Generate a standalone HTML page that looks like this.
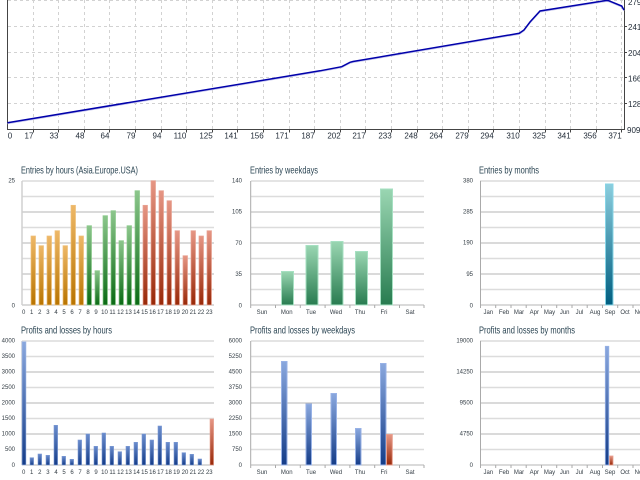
<!DOCTYPE html>
<html><head><meta charset="utf-8"><style>
html,body{margin:0;padding:0;background:#fff;width:640px;height:480px;overflow:hidden}
svg{display:block;font-family:"Liberation Sans",sans-serif}
.t{font-size:10.5px;fill:#2a4452;filter:url(#b)}
.a{font-size:6px;fill:#333c44;filter:url(#b)}
.k{font-size:8px;fill:#222c38}
</style></head><body>
<svg width="640" height="480" viewBox="0 0 640 480" xmlns="http://www.w3.org/2000/svg">
<defs>
<filter id="b" x="-5%" y="-20%" width="110%" height="140%"><feGaussianBlur stdDeviation="0.3"/></filter>
<linearGradient id="o" x1="0" y1="0" x2="0" y2="1"><stop offset="0" stop-color="#eeb868"/><stop offset="1" stop-color="#b87400"/></linearGradient>
<linearGradient id="g" x1="0" y1="0" x2="0" y2="1"><stop offset="0" stop-color="#8cc68c"/><stop offset="1" stop-color="#0a6a14"/></linearGradient>
<linearGradient id="r" x1="0" y1="0" x2="0" y2="1"><stop offset="0" stop-color="#e69684"/><stop offset="1" stop-color="#982808"/></linearGradient>
<linearGradient id="u" x1="0" y1="0" x2="0" y2="1"><stop offset="0" stop-color="#8aa8de"/><stop offset="1" stop-color="#143c88"/></linearGradient>
<linearGradient id="h" x1="0" y1="0" x2="0" y2="1"><stop offset="0" stop-color="#6a8ccc"/><stop offset="1" stop-color="#143c88"/></linearGradient>
<linearGradient id="e" x1="0" y1="0" x2="0" y2="1"><stop offset="0" stop-color="#9ad6b2"/><stop offset="1" stop-color="#287c50"/></linearGradient>
<linearGradient id="c" x1="0" y1="0" x2="0" y2="1"><stop offset="0" stop-color="#8ccede"/><stop offset="1" stop-color="#005e80"/></linearGradient>
<g id="gr">
<path d="M0 6H1000M0 21.5H1000M0 52.5H1000M0 83.5H1000M0 114.5H1000" stroke="#dcdcdc" stroke-width="1.6"/>
<path d="M0 37H1000M0 68H1000M0 99H1000M0 130H1000" stroke="#b4b4b4" stroke-width="1"/>
</g>
</defs>

<!-- top chart -->
<path d="M33.5 0V130M58.5 0V130M84.5 0V130M109.5 0V130M135.5 0V130M161.5 0V130M186.5 0V130M212.5 0V130M237.5 0V130M263.5 0V130M289.5 0V130M314.5 0V130M340.5 0V130M365.5 0V130M391.5 0V130M417.5 0V130M442.5 0V130M468.5 0V130M493.5 0V130M519.5 0V130M545.5 0V130M570.5 0V130M596.5 0V130M621.5 0V130" stroke="#d2d2d2" stroke-dasharray="3 3" fill="none"/>
<path d="M8 0.5H624M8 26.5H624M8 52.5H624M8 77.5H624M8 103.5H624" stroke="#d2d2d2" stroke-dasharray="3 3" fill="none"/>
<path d="M7.5 0V129.5H624.5V0" stroke="#444" fill="none"/>
<path d="M33.5 129.5v3M58.5 129.5v3M84.5 129.5v3M109.5 129.5v3M135.5 129.5v3M161.5 129.5v3M186.5 129.5v3M212.5 129.5v3M237.5 129.5v3M263.5 129.5v3M289.5 129.5v3M314.5 129.5v3M340.5 129.5v3M365.5 129.5v3M391.5 129.5v3M417.5 129.5v3M442.5 129.5v3M468.5 129.5v3M493.5 129.5v3M519.5 129.5v3M545.5 129.5v3M570.5 129.5v3M596.5 129.5v3M621.5 129.5v3M624 26.5h3M624 52.5h3M624 77.5h3M624 103.5h3" stroke="#444" fill="none"/>
<path d="M7.5 122.7L320 70.8L341.7 66.7L350 62.3L353 61.5L519.3 33.3L524 30L530 22L540 11L606.7 .4L609 .8L621.7 6L624 10" fill="none" stroke="#c4c4ec" stroke-width="1" transform="translate(0,1)"/>
<path d="M7.5 122.7L320 70.8L341.7 66.7L350 62.3L353 61.5L519.3 33.3L524 30L530 22L540 11L606.7 .4L609 .8L621.7 6L624 10" fill="none" stroke="#0000aa" stroke-width="1.5"/>
<g class="k" text-anchor="middle">
<text x="10" y="138.5">0</text><text x="29" y="138.5">17</text><text x="54" y="138.5">33</text><text x="80" y="138.5">48</text><text x="105" y="138.5">64</text><text x="131" y="138.5">79</text><text x="157" y="138.5">94</text><text x="180" y="138.5">110</text><text x="206" y="138.5">125</text><text x="231" y="138.5">141</text><text x="257" y="138.5">156</text><text x="282" y="138.5">171</text><text x="308" y="138.5">187</text><text x="334" y="138.5">202</text><text x="359" y="138.5">217</text><text x="385" y="138.5">233</text><text x="411" y="138.5">248</text><text x="436" y="138.5">264</text><text x="462" y="138.5">279</text><text x="487" y="138.5">294</text><text x="513" y="138.5">310</text><text x="539" y="138.5">325</text><text x="564" y="138.5">341</text><text x="590" y="138.5">356</text><text x="615" y="138.5">371</text>
</g>
<g class="k">
<text x="628" y="5">279</text><text x="628" y="30">241</text><text x="628" y="56">204</text><text x="628" y="81.5">166</text><text x="628" y="107">128</text><text x="627" y="133">909</text>
</g>

<!-- Titles -->
<text class="t" x="21" y="173.5" textLength="117" lengthAdjust="spacingAndGlyphs">Entries by hours (Asia.Europe.USA)</text>
<text class="t" x="250" y="173.5" textLength="68" lengthAdjust="spacingAndGlyphs">Entries by weekdays</text>
<text class="t" x="479" y="173.5" textLength="60" lengthAdjust="spacingAndGlyphs">Entries by months</text>
<text class="t" x="21" y="333.5" textLength="91" lengthAdjust="spacingAndGlyphs">Profits and losses by hours</text>
<text class="t" x="250" y="333.5" textLength="105" lengthAdjust="spacingAndGlyphs">Profits and losses by weekdays</text>
<text class="t" x="479" y="333.5" textLength="96" lengthAdjust="spacingAndGlyphs">Profits and losses by months</text>

<!-- grids -->
<svg x="22" y="175" width="192" height="136"><use href="#gr"/></svg>
<svg x="251" y="175" width="173" height="136"><use href="#gr"/></svg>
<svg x="480" y="175" width="160" height="136"><use href="#gr"/></svg>
<svg x="22" y="335" width="192" height="136"><use href="#gr"/></svg>
<svg x="251" y="335" width="173" height="136"><use href="#gr"/></svg>
<svg x="480" y="335" width="160" height="136"><use href="#gr"/></svg>

<!-- axes -->
<path d="M22 181V305M22 341V465" stroke="#d0d0d0" stroke-width="1.5"/>
<path d="M250.7 181V308M275.5 305v3M300.3 305v3M325.1 305v3M349.9 305v3M374.7 305v3M399.5 305v3M424 305v3M250.7 341V468M275.5 465v3M300.3 465v3M325.1 465v3M349.9 465v3M374.7 465v3M399.5 465v3M424 465v3" stroke="#aaa" fill="none"/>
<path d="M480.5 181V308M495.7 305v3M511 305v3M526.2 305v3M541.5 305v3M556.7 305v3M572 305v3M587.2 305v3M602.5 305v3M617.7 305v3M633 305v3M480.5 341V468M495.7 465v3M511 465v3M526.2 465v3M541.5 465v3M556.7 465v3M572 465v3M587.2 465v3M602.5 465v3M617.7 465v3M633 465v3" stroke="#aaa" fill="none"/>

<!-- Entries by hours -->
<g fill="url(#o)" stroke="#efc07a" stroke-width=".7">
<rect x="31" y="236" width="4.5" height="69"/><rect x="39" y="245.7" width="4.5" height="59.3"/><rect x="47" y="236" width="4.5" height="69"/><rect x="55" y="230.7" width="4.5" height="74.3"/><rect x="63" y="245.7" width="4.5" height="59.3"/><rect x="71" y="205.3" width="4.5" height="99.7"/><rect x="79" y="236" width="4.5" height="69"/>
</g>
<g fill="url(#g)" stroke="#8ccb8c" stroke-width=".7">
<rect x="87" y="225.7" width="4.5" height="79.3"/><rect x="95" y="270.7" width="4.5" height="34.3"/><rect x="103" y="215.7" width="4.5" height="89.3"/><rect x="111" y="210.7" width="4.5" height="94.3"/><rect x="119" y="240.7" width="4.5" height="64.3"/><rect x="127" y="225.7" width="4.5" height="79.3"/><rect x="135" y="190.7" width="4.5" height="114.3"/>
</g>
<g fill="url(#r)" stroke="#e8a494" stroke-width=".7">
<rect x="143" y="205.3" width="4.5" height="99.7"/><rect x="151" y="180.7" width="4.5" height="124.3"/><rect x="159" y="190.7" width="4.5" height="114.3"/><rect x="167" y="200.7" width="4.5" height="104.3"/><rect x="175" y="230.7" width="4.5" height="74.3"/><rect x="183" y="255.7" width="4.5" height="49.3"/><rect x="191" y="230.7" width="4.5" height="74.3"/><rect x="199" y="236" width="4.5" height="69"/><rect x="207" y="230.7" width="4.5" height="74.3"/>
</g>

<!-- Profits by hours -->
<rect x="22" y="341.7" width="4" height="123.3" fill="url(#u)" stroke="#a8bee8" stroke-width=".6"/>
<g fill="url(#h)" stroke="#7c9ad4" stroke-width=".6">
<rect x="30" y="457.7" width="3.6" height="7.3"/><rect x="38" y="454" width="3.6" height="11"/><rect x="46" y="455.3" width="3.6" height="9.7"/><rect x="54" y="425.3" width="3.6" height="39.7"/><rect x="62" y="456.3" width="3.6" height="8.7"/><rect x="70" y="459.3" width="3.6" height="5.7"/><rect x="78" y="440" width="3.6" height="25"/><rect x="86" y="434" width="3.6" height="31"/><rect x="94" y="446.3" width="3.6" height="18.7"/><rect x="102" y="433" width="3.6" height="32"/><rect x="110" y="446.3" width="3.6" height="18.7"/><rect x="118" y="451.7" width="3.6" height="13.3"/><rect x="126" y="446.3" width="3.6" height="18.7"/><rect x="134" y="442.3" width="3.6" height="22.7"/><rect x="142" y="434" width="3.6" height="31"/><rect x="150" y="440" width="3.6" height="25"/><rect x="158" y="426" width="3.6" height="39"/><rect x="166" y="442.3" width="3.6" height="22.7"/><rect x="174" y="442.3" width="3.6" height="22.7"/><rect x="182" y="452.7" width="3.6" height="12.3"/><rect x="190" y="454.3" width="3.6" height="10.7"/><rect x="198" y="459" width="3.6" height="6"/>
</g>
<rect x="210" y="419" width="3.6" height="46" fill="url(#r)" stroke="#e8a494" stroke-width=".6"/>

<!-- Entries by weekdays -->
<g fill="url(#e)" stroke="#a6e0c2" stroke-width="1">
<rect x="281.5" y="271.5" width="12" height="33.5"/><rect x="306" y="245.5" width="12" height="59.5"/><rect x="331" y="241.5" width="12" height="63.5"/><rect x="355.5" y="251.5" width="12" height="53.5"/><rect x="380.5" y="189" width="12" height="116"/>
</g>

<!-- Profits by weekdays -->
<g fill="url(#u)" stroke="#98b2e6" stroke-width="1">
<rect x="281.5" y="361.5" width="5.5" height="103.5"/><rect x="306" y="404" width="5.5" height="61"/><rect x="331" y="393.5" width="5.5" height="71.5"/><rect x="355.5" y="428.5" width="5.5" height="36.5"/><rect x="380.5" y="363.5" width="5.5" height="101.5"/>
</g>
<rect x="386.5" y="434.5" width="5.8" height="30.5" fill="url(#r)" stroke="#e8a090" stroke-width="1"/>

<!-- Entries by months -->
<rect x="605.5" y="184" width="7.5" height="121" fill="url(#c)" stroke="#86d4e6" stroke-width="1"/>

<!-- Profits by months -->
<rect x="605.3" y="346.3" width="3.5" height="118.7" fill="url(#u)" stroke="#98b2e6" stroke-width=".8"/>
<rect x="609.5" y="456" width="3.5" height="9" fill="url(#r)" stroke="#e8a090" stroke-width=".8"/>

<!-- y labels -->
<g class="a" text-anchor="end">
<text x="15" y="182.5">25</text><text x="15" y="307.5">0</text>
<text x="15" y="342.5">4000</text><text x="15" y="358">3500</text><text x="15" y="373.5">3000</text><text x="15" y="389">2500</text><text x="15" y="404.5">2000</text><text x="15" y="420">1500</text><text x="15" y="435.5">1000</text><text x="15" y="451">500</text><text x="15" y="467">0</text>
<text x="242" y="182.5">140</text><text x="242" y="213.5">105</text><text x="242" y="245">70</text><text x="242" y="276">35</text><text x="242" y="307.5">0</text>
<text x="242" y="342.5">6000</text><text x="242" y="358">5250</text><text x="242" y="373.5">4500</text><text x="242" y="389">3750</text><text x="242" y="404.5">3000</text><text x="242" y="420">2250</text><text x="242" y="435.5">1500</text><text x="242" y="451">750</text><text x="242" y="467">0</text>
<text x="473" y="182.5">380</text><text x="473" y="213.5">285</text><text x="473" y="244.5">190</text><text x="473" y="276">95</text><text x="473" y="307.5">0</text>
<text x="473" y="342.5">19000</text><text x="473" y="373.5">14250</text><text x="473" y="404.5">9500</text><text x="473" y="435.5">4750</text><text x="473" y="467">0</text>
</g>

<!-- x labels -->
<g class="a" text-anchor="middle">
<text x="23.7" y="314">0</text><text x="31.7" y="314">1</text><text x="39.8" y="314">2</text><text x="47.9" y="314">3</text><text x="56" y="314">4</text><text x="64" y="314">5</text><text x="72" y="314">6</text><text x="80" y="314">7</text><text x="88" y="314">8</text><text x="96" y="314">9</text><text x="104.5" y="314">10</text><text x="112.5" y="314">11</text><text x="120.5" y="314">12</text><text x="128.5" y="314">13</text><text x="136.5" y="314">14</text><text x="144.5" y="314">15</text><text x="152.5" y="314">16</text><text x="160.5" y="314">17</text><text x="168.5" y="314">18</text><text x="176.5" y="314">19</text><text x="185" y="314">20</text><text x="193" y="314">21</text><text x="201" y="314">22</text><text x="209.3" y="314">23</text>
<text x="23.7" y="474">0</text><text x="31.7" y="474">1</text><text x="39.8" y="474">2</text><text x="47.9" y="474">3</text><text x="56" y="474">4</text><text x="64" y="474">5</text><text x="72" y="474">6</text><text x="80" y="474">7</text><text x="88" y="474">8</text><text x="96" y="474">9</text><text x="104.5" y="474">10</text><text x="112.5" y="474">11</text><text x="120.5" y="474">12</text><text x="128.5" y="474">13</text><text x="136.5" y="474">14</text><text x="144.5" y="474">15</text><text x="152.5" y="474">16</text><text x="160.5" y="474">17</text><text x="168.5" y="474">18</text><text x="176.5" y="474">19</text><text x="185" y="474">20</text><text x="193" y="474">21</text><text x="201" y="474">22</text><text x="209.3" y="474">23</text>
<text x="262" y="314">Sun</text><text x="286.7" y="314">Mon</text><text x="311" y="314">Tue</text><text x="336" y="314">Wed</text><text x="360" y="314">Thu</text><text x="384" y="314">Fri</text><text x="410" y="314">Sat</text>
<text x="262" y="474">Sun</text><text x="286.7" y="474">Mon</text><text x="311" y="474">Tue</text><text x="336" y="474">Wed</text><text x="360" y="474">Thu</text><text x="384" y="474">Fri</text><text x="410" y="474">Sat</text>
<text x="488.3" y="314">Jan</text><text x="504" y="314">Feb</text><text x="519" y="314">Mar</text><text x="534.3" y="314">Apr</text><text x="549.5" y="314">May</text><text x="564.7" y="314">Jun</text><text x="579.5" y="314">Jul</text><text x="595" y="314">Aug</text><text x="610" y="314">Sep</text><text x="625" y="314">Oct</text><text x="640" y="314">Nov</text>
<text x="488.3" y="474">Jan</text><text x="504" y="474">Feb</text><text x="519" y="474">Mar</text><text x="534.3" y="474">Apr</text><text x="549.5" y="474">May</text><text x="564.7" y="474">Jun</text><text x="579.5" y="474">Jul</text><text x="595" y="474">Aug</text><text x="610" y="474">Sep</text><text x="625" y="474">Oct</text><text x="640" y="474">Nov</text>
</g>
</svg>
</body></html>
